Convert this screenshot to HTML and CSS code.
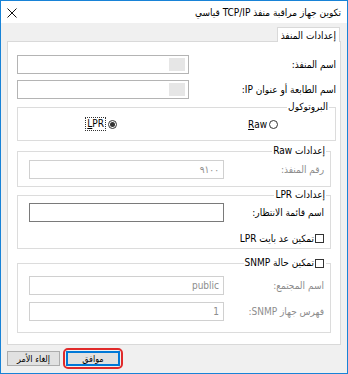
FILE: index.html
```html
<!DOCTYPE html>
<html lang="ar" dir="rtl">
<head>
    <meta charset="UTF-8">
    <title>تكوين جهاز مراقبة منفذ TCP/IP قياسي</title>
    <link rel="stylesheet" href="styles.css">
</head>
<body>
    <div class="window">
        <div class="titlebar">
            <span class="title">تكوين جهاز مراقبة منفذ TCP/IP قياسي</span>
            <svg class="close" width="10" height="10" viewBox="0 0 10 10">
                <path d="M0.5 0.5 L9.5 9.5 M9.5 0.5 L0.5 9.5" stroke="#111" stroke-width="1" fill="none"/>
            </svg>
        </div>

        <div class="client">
            <div class="tabs">
                <div class="tab">إعدادات المنفذ</div>
            </div>

            <div class="panel">
                <div class="field">
                    <span class="label">اسم المنفذ:</span>
                    <div class="box wide soft"><span class="hidden-text"></span></div>
                </div>
                <div class="field second">
                    <span class="label">اسم الطابعة أو عنوان IP:</span>
                    <div class="box wide soft"><span class="hidden-text"></span></div>
                </div>

                <fieldset class="group protocol">
                    <legend>البروتوكول</legend>
                    <div class="radios">
                        <span class="radio first"><span class="dot"></span><span><u>R</u>aw</span></span>
                        <span class="radio"><span class="dot checked"></span><span class="focus"><u>L</u>PR</span></span>
                    </div>
                </fieldset>

                <fieldset class="group raw">
                    <legend>إعدادات Raw</legend>
                    <div class="field inner">
                        <span class="label off">رقم المنفذ:</span>
                        <div class="box off">٩١٠٠</div>
                    </div>
                </fieldset>

                <fieldset class="group lpr">
                    <legend>إعدادات LPR</legend>
                    <div class="field inner">
                        <span class="label">اسم قائمة الانتظار:</span>
                        <div class="box dark"></div>
                    </div>
                    <div class="check-row">
                        <span class="check"></span><span>تمكين عد بايت LPR</span>
                    </div>
                </fieldset>

                <fieldset class="group snmp">
                    <legend><span class="check"></span><span>تمكين حالة SNMP</span></legend>
                    <div class="field inner">
                        <span class="label off">اسم المجتمع:</span>
                        <div class="box off">public</div>
                    </div>
                    <div class="field inner next">
                        <span class="label off">فهرس جهاز SNMP:</span>
                        <div class="box off">1</div>
                    </div>
                </fieldset>
            </div>

            <div class="buttons">
                <span class="ring"><button class="btn default">موافق</button></span>
                <button class="btn">إلغاء الأمر</button>
            </div>
        </div>
    </div>
</body>
</html>
```

FILE: styles.css
```css
body {
    margin: 0;
    font-family: "DejaVu Sans", sans-serif;
    font-stretch: condensed;
    font-size: 10px;
    color: #000;
    background: #fff;
}
.window {
    width: 348px;
    height: 374px;
    box-sizing: border-box;
    border: 1px solid #1883d7;
    background: #f0f0f0;
    display: flex;
    flex-direction: column;
}
.titlebar {
    height: 22px;
    background: #fff;
    display: flex;
    align-items: center;
    justify-content: space-between;
    padding: 1px 6px 0 6px;
    box-sizing: border-box;
    flex-shrink: 0;
}
.title {
    font-size: 10px;
}
.close {
    display: block;
}
.client {
    flex: 1;
    padding: 4px 6px 0;
    display: flex;
    flex-direction: column;
}
.tabs {
    display: flex;
    height: 15px;
    position: relative;
    z-index: 1;
    margin-bottom: -1px;
}
.tab {
    background: #fff;
    border: 1px solid #d9d9d9;
    border-bottom: none;
    padding: 0 3px;
    margin-right: 1px;
    line-height: 15px;
}
.panel {
    height: 304px;
    box-sizing: border-box;
    background: #fff;
    border: 1px solid #d9d9d9;
    padding: 13px 4px 0 9px;
}
.field {
    display: flex;
    justify-content: space-between;
    align-items: center;
    height: 19px;
}
.field.second {
    margin-top: 6px;
}
.box {
    width: 195px;
    height: 19px;
    box-sizing: border-box;
    border: 1px solid #d0d0d0;
    background: #fff;
    display: flex;
    align-items: center;
    padding: 0 4px;
}
.box.wide {
    width: 172px;
    padding: 0 3px;
}
.box.soft {
    border-color: #b4b4b4;
}
.box.dark {
    border-color: #7a7a7a;
}
.box.off {
    color: #8d8d8d;
}
.hidden-text {
    width: 16px;
    height: 13px;
    background: #e6e6e6;
}
.label.off {
    color: #8d8d8d;
}
.group {
    margin: 0 0 0 auto;
    padding: 0 4px;
    min-width: 0;
    box-sizing: border-box;
    border: 1px solid #dcdcdc;
    width: 314px;
}
.raw, .lpr, .snmp {
    margin-left: 0;
    margin-right: auto;
}
.group legend {
    padding: 0 1px;
    line-height: 14px;
}
.protocol {
    width: 319px;
    height: 41px;
    margin-top: 1px;
    padding: 0 6px;
}
.raw {
    height: 43px;
    margin-top: 3px;
}
.lpr {
    height: 61px;
    margin-top: 1px;
}
.snmp {
    height: 77px;
    margin-top: 7px;
}
.snmp legend {
    display: flex;
    align-items: center;
    gap: 1px;
    padding: 0 2px 0 1px;
}
.radios {
    display: flex;
    align-items: center;
    height: 20px;
}
.radio {
    display: flex;
    align-items: center;
    gap: 2px;
}
.radio.first {
    width: 161px;
    margin-right: 51px;
}
.dot {
    width: 9px;
    height: 9px;
    box-sizing: border-box;
    border: 1px solid #333;
    border-radius: 50%;
    display: flex;
    align-items: center;
    justify-content: center;
}
.dot.checked::after {
    content: "";
    width: 5px;
    height: 5px;
    border-radius: 50%;
    background: #333;
}
.focus {
    border: 1px dotted #333;
    padding: 0 1px;
    line-height: 12px;
}
.field.inner {
    margin-top: 2px;
    padding: 0 2px 0 7px;
}
.lpr .field.inner {
    margin-top: 1px;
}
.snmp .field.inner {
    margin-top: 6px;
}
.snmp .field.next {
    margin-top: 7px;
}
.check-row {
    display: flex;
    align-items: center;
    gap: 1px;
    height: 14px;
    margin-top: 9px;
    padding-right: 2px;
}
.check {
    width: 9px;
    height: 9px;
    box-sizing: border-box;
    border: 1px solid #333;
    background: #fff;
    display: inline-block;
}
.buttons {
    display: flex;
    justify-content: flex-end;
    align-items: center;
    gap: 3px;
    margin-top: 3px;
}
.ring {
    border: 2px solid #e02a2a;
    border-radius: 5px;
    padding: 1px;
    display: flex;
}
.btn {
    width: 53px;
    height: 15px;
    box-sizing: border-box;
    border: 1px solid #adadad;
    background: #e1e1e1;
    font-family: "DejaVu Sans", sans-serif;
    font-stretch: condensed;
    font-size: 9px;
    padding: 0;
    color: #000;
}
.btn.default {
    width: 54px;
    border-color: #0078d7;
    box-shadow: inset 0 0 0 1px #0078d7;
}
```
